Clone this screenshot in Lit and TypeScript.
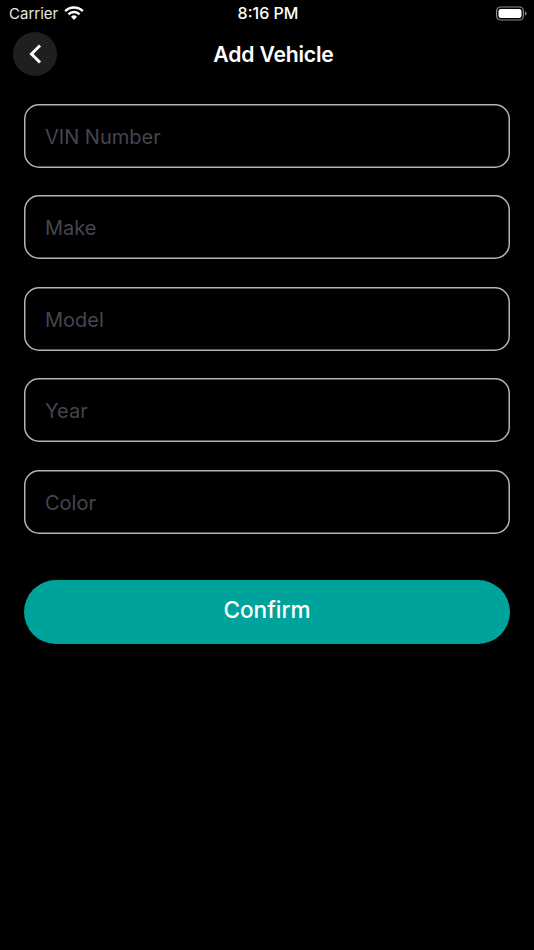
import { LitElement, html, css } from "lit";
import { customElement } from "lit/decorators.js";

const FIELDS = ["VIN Number", "Make", "Model", "Year", "Color"];

@customElement("app-root")
export class AppRoot extends LitElement {
  static styles = css`
    :host {
      display: block;
      width: 534px;
      height: 950px;
      background: #000;
      color: #fff;
      font-family: Inter, "Liberation Sans", sans-serif;
      overflow: hidden;
    }
    .status {
      height: 26px;
      display: grid;
      grid-template-columns: 1fr auto 1fr;
      align-items: center;
      padding: 0 7px 0 9px;
      color: #fff;
    }
    .left { display: flex; align-items: center; gap: 6px; }
    .left span { color: #e8e8e8; font-size: 15px; }
    .right { display: flex; justify-content: flex-end; }
    .time { font-weight: 500; font-size: 16px; }
    .nav {
      height: 54px;
      margin-top: 1px;
      display: grid;
      grid-template-columns: 44px 1fr 44px;
      align-items: center;
      padding: 0 0 0 13px;
    }
    .back {
      width: 44px;
      height: 44px;
      border-radius: 50%;
      background: #1f1f1f;
      display: flex;
      align-items: center;
      justify-content: center;
    }
    .title {
      text-align: center;
      font-size: 21.2px;
      font-weight: 600;
      letter-spacing: -0.2px;
    }
    .form {
      display: flex;
      flex-direction: column;
      gap: 27.6px;
      padding: 23px 24px 0;
    }
    .field {
      height: 63.9px;
      box-sizing: border-box;
      box-shadow: inset 0 0 0 1.5px #b4b4b4;
      border-radius: 15px;
      display: flex;
      align-items: center;
      padding: 2px 0 0 21px;
      font-size: 20px;
      color: #45454f;
    }
    .confirm {
      margin: 46.5px 24px 0;
      height: 64px;
      border-radius: 32px;
      background: #00a39c;
      display: flex;
      align-items: center;
      justify-content: center;
      padding-bottom: 5px;
      box-sizing: border-box;
      font-size: 22.6px;
      font-weight: 450;
      color: #fff;
    }
  `;

  render() {
    return html`
      <div class="status">
        <div class="left">
          <span>Carrier</span>
          <svg width="20" height="15" viewBox="0 0 20 15">
            <path d="M1.2 5.2a12.4 12.4 0 0 1 17.6 0" fill="none" stroke="#fff" stroke-width="2.4"/>
            <path d="M4.4 8.3a7.9 7.9 0 0 1 11.2 0" fill="none" stroke="#fff" stroke-width="2.4"/>
            <path d="M10 14l-3-3.2a4.3 4.3 0 0 1 6 0z" fill="#fff"/>
          </svg>
        </div>
        <div class="time">8:16 PM</div>
        <div class="right">
          <svg width="31" height="15" viewBox="0 0 31 15">
            <rect x="0.6" y="1" width="26.8" height="13" rx="4" fill="none" stroke="#8c8c8c" stroke-width="1.2"/>
            <rect x="2.5" y="2.9" width="23" height="9.2" rx="2.4" fill="#fff"/>
            <path d="M29 5.4c1 .3 1.6 1.1 1.6 2.1s-.6 1.8-1.6 2.1z" fill="#8c8c8c"/>
          </svg>
        </div>
      </div>
      <div class="nav">
        <div class="back">
          <svg width="14" height="22" viewBox="0 0 14 22">
            <path d="M11 3.5L3.5 11l7.5 7.5" fill="none" stroke="#fff" stroke-width="3" stroke-linecap="square"/>
          </svg>
        </div>
        <div class="title">Add Vehicle</div>
        <div></div>
      </div>
      <div class="form">
        ${FIELDS.map((f) => html`<div class="field">${f}</div>`)}
      </div>
      <div class="confirm">Confirm</div>
    `;
  }
}
